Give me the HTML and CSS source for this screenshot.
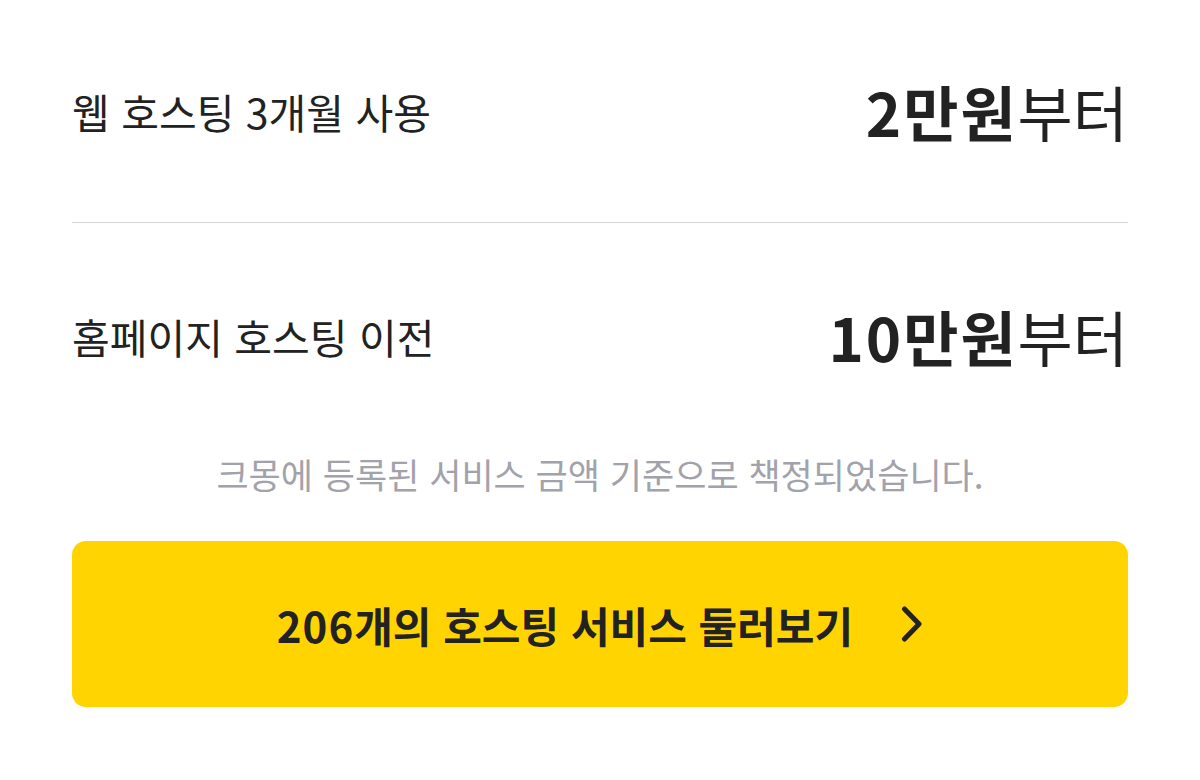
FILE: index.html
```html
<!DOCTYPE html>
<html lang="ko">
<head>
  <meta charset="UTF-8" />
  <meta name="viewport" content="width=device-width, initial-scale=1.0"/>
  <title>호스팅 가격</title>
  <link rel="stylesheet" href="styles.css">
</head>
<body>

  <div class="price-box">
    <div class="price-row">
      <span class="price-label">웹 호스팅 3개월 사용</span>
      <span class="price-value"><strong>2만원</strong>부터</span>
    </div>

    <div class="price-row">
      <span class="price-label">홈페이지 호스팅 이전</span>
      <span class="price-value"><strong>10만원</strong>부터</span>
    </div>

    <p class="price-note">크몽에 등록된 서비스 금액 기준으로 책정되었습니다.</p>

    <a class="browse-btn" href="#">
      <span><span class="num">206</span>개의 호스팅 서비스 둘러보기</span>
      <svg class="chevron" viewBox="0 0 22 36" width="22" height="36">
        <path d="M3.5 3 L18 18 L3.5 33" fill="none" stroke="#222" stroke-width="5" stroke-linecap="round" stroke-linejoin="round"/>
      </svg>
    </a>
  </div>

</body>
</html>
```

FILE: styles.css
```css
* { box-sizing: border-box; }

body {
  margin: 0;
  background-color: #fff;
  color: #222;
  font-family: "Noto Sans CJK KR", "Noto Sans", sans-serif;
}

.price-box {
  width: 1056px;
  margin: 0 auto;
}

.price-row {
  display: flex;
  justify-content: space-between;
  align-items: center;
  height: 223px;
  border-bottom: 1px solid #d5d5d8;
}

.price-row + .price-row {
  height: 226px;
  border-bottom: none;
}

.price-label {
  font-size: 41px;
  font-weight: 400;
}

.price-value {
  font-size: 60px;
  font-weight: 400;
  line-height: 1;
}

.price-value strong {
  font-weight: 700;
  letter-spacing: 2px;
}

.price-note {
  margin: 0;
  text-align: center;
  font-size: 35px;
  color: #a2a2ab;
  line-height: 50px;
}

.browse-btn {
  display: flex;
  justify-content: center;
  align-items: center;
  gap: 48px;
  height: 166px;
  margin-top: 42px;
  border-radius: 14px;
  background-color: #ffd400;
  color: #222;
  text-decoration: none;
  font-size: 42px;
  font-weight: 700;
}

.num {
  letter-spacing: 1px;
}

.chevron {
  display: block;
}
```
